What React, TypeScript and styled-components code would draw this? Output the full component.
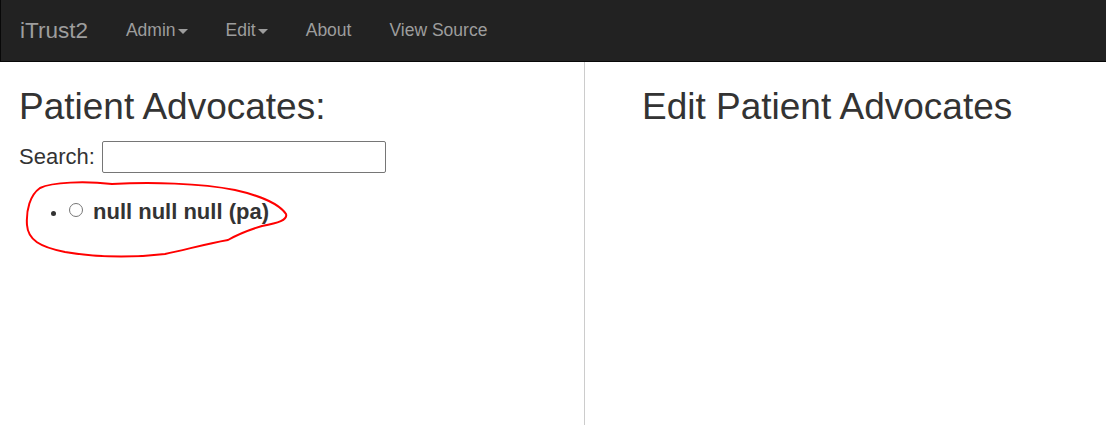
import styled, { createGlobalStyle } from 'styled-components';

const GlobalStyle = createGlobalStyle`
    html, body {
        margin: 0;
        padding: 0;
        background: #fff;
    }
    body {
        font-family: "Liberation Sans", Arial, sans-serif;
        color: #333;
    }
`;

const Page = styled.div`
    position: relative;
    width: 100%;
    min-height: 100vh;
    display: flex;
    flex-direction: column;
`;

const Navbar = styled.nav`
    box-sizing: border-box;
    height: 62px;
    background: #222;
    border-bottom: 1px solid #080808;
    border-left: 1px solid #080808;
    display: flex;
    align-items: center;
    padding-left: 19px;
`;

const Brand = styled.a`
    font-size: 22.5px;
    color: #9d9d9d;
    text-decoration: none;
    margin-right: 19px;
`;

const NavItem = styled.a`
    font-size: 17.5px;
    color: #9d9d9d;
    text-decoration: none;
    padding: 0 19px;
    display: flex;
    align-items: center;
`;

const Caret = styled.span`
    display: inline-block;
    width: 0;
    height: 0;
    margin-left: 2px;
    margin-top: 2px;
    border-top: 5px solid #9d9d9d;
    border-left: 5px solid transparent;
    border-right: 5px solid transparent;
`;

const Main = styled.div`
    flex: 1;
    display: flex;
`;

const Column = styled.section<{ divider?: boolean; inset: number }>`
    box-sizing: border-box;
    width: ${props => props.divider ? '585px' : 'auto'};
    flex: ${props => props.divider ? 'none' : '1'};
    border-right: ${props => props.divider ? '1px solid #ccc' : 'none'};
    padding-left: ${props => props.inset}px;
`;

const Heading = styled.h2`
    font-size: 37px;
    font-weight: 400;
    line-height: 1.1;
    margin: 25px 0 13px;
`;

const SearchRow = styled.div`
    display: flex;
    align-items: center;
    gap: 7px;
    font-size: 22px;
`;

const SearchInput = styled.input`
    box-sizing: border-box;
    width: 284px;
    height: 32px;
    border: 1px solid #767676;
    border-radius: 2px;
    padding: 1px 2px;
    font-size: 17px;
`;

const List = styled.ul`
    list-style: none;
    margin: 26px 0 0;
    padding-left: 32px;
`;

const Item = styled.li`
    display: flex;
    align-items: center;
    font-size: 22px;
    font-weight: 700;
    line-height: 25px;

    &::before {
        content: '';
        width: 5px;
        height: 5px;
        border-radius: 50%;
        background: #333;
        margin: 4px 13px 0 0;
    }
`;

const Radio = styled.span`
    box-sizing: border-box;
    width: 14px;
    height: 14px;
    border: 1px solid #767676;
    border-radius: 50%;
    margin: -3px 10px 0 0;
`;

const Scribble = styled.svg`
    position: absolute;
    top: 0;
    left: 0;
    pointer-events: none;
`;

export default function App() {
    return (
        <Page>
            <GlobalStyle />
            <Navbar>
                <Brand>iTrust2</Brand>
                <NavItem>Admin<Caret /></NavItem>
                <NavItem>Edit<Caret /></NavItem>
                <NavItem>About</NavItem>
                <NavItem>View Source</NavItem>
            </Navbar>
            <Main>
                <Column divider inset={19}>
                    <Heading>Patient Advocates:</Heading>
                    <SearchRow>
                        <label>Search:</label>
                        <SearchInput type="text" />
                    </SearchRow>
                    <List>
                        <Item><Radio />null null null (pa)</Item>
                    </List>
                </Column>
                <Column inset={57}>
                    <Heading>Edit Patient Advocates</Heading>
                </Column>
            </Main>
            <Scribble width="1106" height="425" viewBox="0 0 1106 425">
                <path
                    d="M112 184 C 150 182, 200 183, 235 190 C 262 196, 280 205, 286 214 C 288 220, 278 223, 262 226 C 245 231, 235 236, 228 240 C 205 244, 185 250, 165 254 C 130 258, 95 257, 65 252 C 40 247, 28 240, 27 225 C 26 210, 30 195, 40 188 C 52 182, 85 181, 112 184"
                    fill="none"
                    stroke="#f00"
                    strokeWidth="2"
                    strokeLinecap="round"
                />
            </Scribble>
        </Page>
    );
}
